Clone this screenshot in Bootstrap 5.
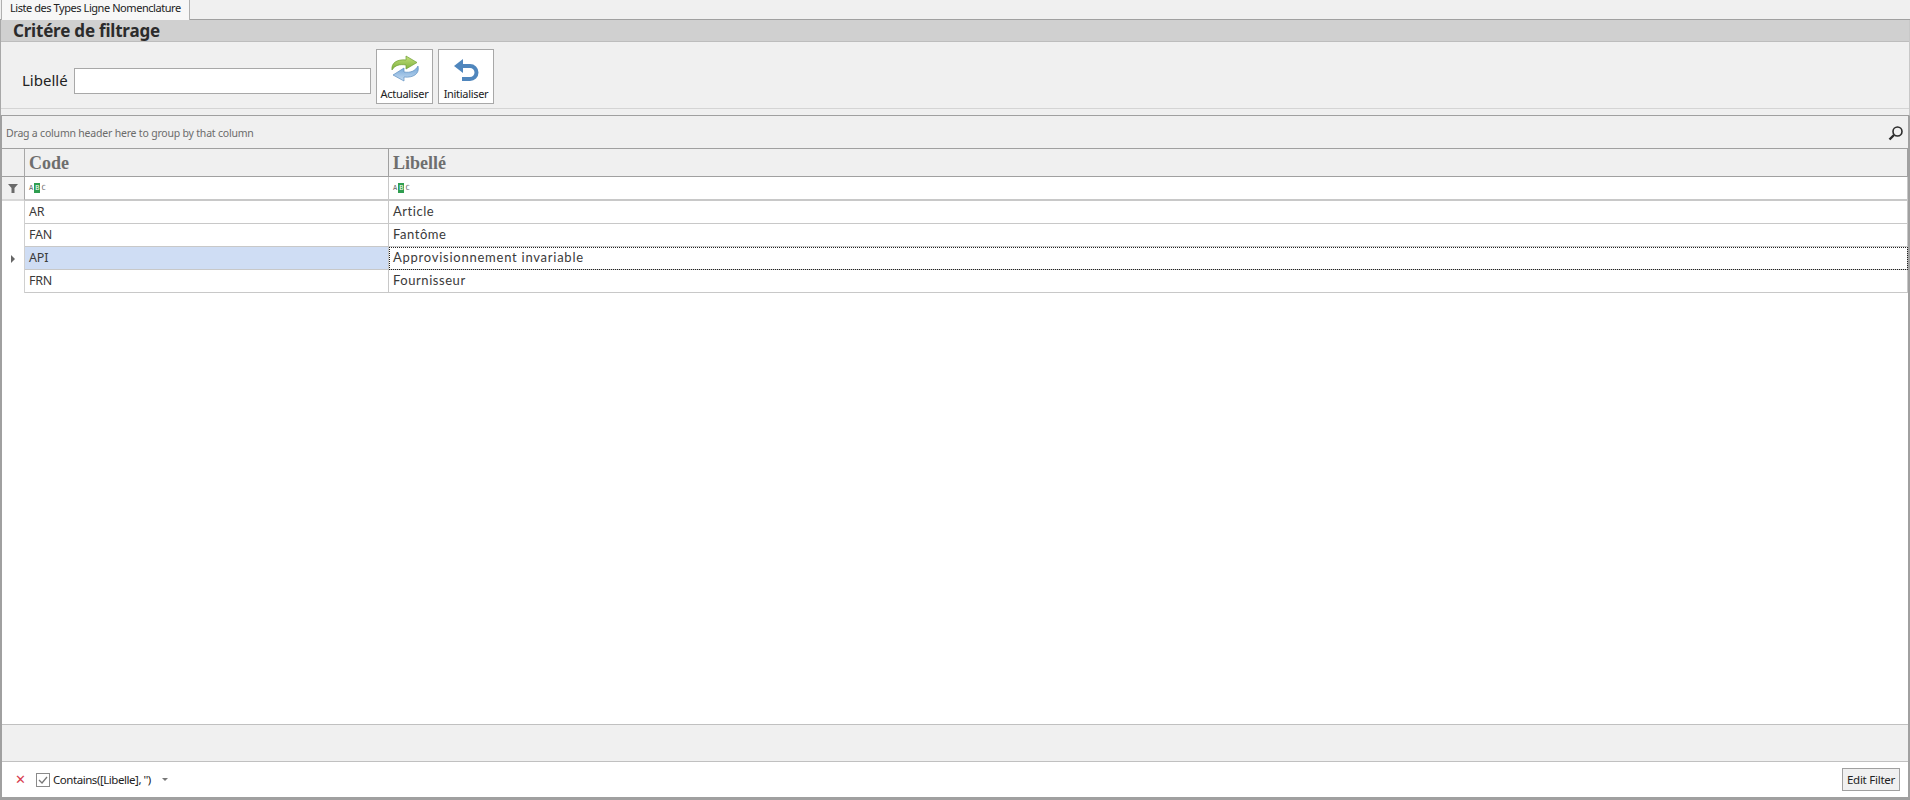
<!DOCTYPE html>
<html lang="fr">
<head>
<meta charset="utf-8">
<title>Liste des Types Ligne Nomenclature</title>
<link href="https://cdn.jsdelivr.net/npm/bootstrap@5.3.0/dist/css/bootstrap.min.css" rel="stylesheet">
<style>
html,body{height:100%;margin:0;overflow:hidden;background:#f0f0f0;color:#222;font-family:"Liberation Sans",sans-serif}
.shell{height:800px}
.tabstrip{height:20px;background:#f0f0f0;border-bottom:1px solid #a0a0a0;padding-left:1px}
.doc-tab{width:189px;height:20px;background:#f7f7f7;border:1px solid #b0b0b0;border-top:0;border-bottom:0;font:11px/16px "Noto Sans",sans-serif;letter-spacing:-.44px;padding-left:8px;color:#222;white-space:nowrap}
.filter-panel{height:96px;border-left:1px solid #a8a8a8;border-right:1px solid #c8c8c8;border-bottom:1px solid #a0a0a0;background:#f0f0f0}
.panel-title{height:22px;background:#d0d0d0;border-bottom:1px solid #bdbdbd;padding-left:12px;font:bold 17px/22px "Noto Sans",sans-serif;letter-spacing:-.2px;color:#2b2b2b}
.panel-body-row{height:67px;border-bottom:1px solid #d4d4d4;padding-left:21px;padding-top:7px}
.field-label{font:15px/1 "Noto Sans",sans-serif;width:52px;margin-top:24px;color:#222}
.field-input{width:297px;height:26px;background:#fff;border:1px solid #a8a8a8;margin-top:19px}
.tool-btn{width:57px;height:55px;background:#fff;border:1px solid #a8a8a8;font:11px/1 "Noto Sans",sans-serif;letter-spacing:-.3px;color:#222;padding:5px 0 0;margin-left:5px}
.tool-btn svg{display:block;margin-bottom:3px}
.grid-wrap{flex:1 1 auto;min-height:0;border-left:2px solid #a0a0a0;border-right:2px solid #a0a0a0;background:#fff}
.group-bar{height:33px;background:#f0f0f0;border-bottom:1px solid #a0a0a0;padding:1px 4px 0;font:10.5px "Noto Sans",sans-serif;letter-spacing:-.2px;color:#6b6b6b}
.data-grid{table-layout:fixed;width:100%;margin:0;border-collapse:separate;border-spacing:0;background:#fff}
.data-grid td,.data-grid th{padding:0 0 0 4px;border-right:1px solid #c8c8c8;border-bottom:1px solid #c8c8c8;vertical-align:middle;background:#fff;box-shadow:none;overflow:hidden;white-space:nowrap;line-height:1}
.data-grid .ind{width:23px;padding:0;border-right:1px solid #a8a8a8;text-align:center}
.data-grid .col-code{width:364px}
.data-grid thead th{height:28px;background:#f0f0f0;border-color:#a0a0a0;font:bold 18px/1 "Liberation Serif",serif;color:#6e6e6e}
.data-grid .filter-row td{height:24px;border-bottom:2px solid #c8c8c8;font-size:9px}
.data-grid .filter-row .ind{background:#f0f0f0;border-bottom-color:#d8d8d8}
.data-grid .data-row td{height:23px;padding-bottom:1px;font:13px/1 "Lato",sans-serif;letter-spacing:.55px;color:#3a3a3a}
.data-grid .data-row .code-cell{font-family:"Noto Sans",sans-serif;font-size:12.5px;letter-spacing:-.2px;padding-bottom:0}
.data-grid .data-row .ind{border-bottom:0;border-right-color:#d0d0d0;padding-bottom:2px}
.data-grid .active-row .code-cell{background:#cfddf4}
.data-grid .active-row .focus-cell{outline:1px dotted #222;outline-offset:-1px;letter-spacing:.75px}
.abc-tag{font:7px/9px "DejaVu Sans Mono",monospace;color:#666;display:inline-flex;align-items:center;gap:1px}
.abc-tag b{background:#2f9e50;color:#fff;font-weight:400;padding:0 1px;line-height:10px}
.status-gray{height:38px;background:#f0f0f0;border-top:1px solid #c0c0c0;border-bottom:1px solid #c0c0c0}
.filter-foot{height:35px;background:#fff;padding:0 8px 0 13px}
.x-mark{color:#d8404f;font:13px/1 "DejaVu Sans",sans-serif;width:14px;margin-right:7px;margin-top:-1px}
.check-box{width:14px;height:14px;border:1px solid #8a8a8a;margin-right:3px}
.filter-text{font:11.5px "Noto Sans",sans-serif;letter-spacing:-.45px;color:#222;width:105px;white-space:nowrap}
.caret-down{width:0;height:0;border-left:3.5px solid transparent;border-right:3.5px solid transparent;border-top:3.5px solid #777}
.edit-btn{width:58px;height:23px;background:#f0f0f0;border:1px solid #a0a0a0;font:11.5px/1 "Noto Sans",sans-serif;letter-spacing:-.25px;color:#222;padding:0}
.foot-line{height:3px;background:#a0a0a0}
</style>
</head>
<body>
<div class="shell d-flex flex-column">
  <div class="tabstrip flex-shrink-0 d-flex"><div class="doc-tab">Liste des Types Ligne Nomenclature</div></div>
  <div class="filter-panel flex-shrink-0">
    <div class="panel-title">Critére de filtrage</div>
    <div class="panel-body-row d-flex align-items-start">
      <div class="field-label">Libellé</div>
      <div class="field-input"></div>
      <button class="tool-btn d-flex flex-column align-items-center" type="button">
        <svg width="32" height="30" viewBox="0 0 32 30">
          <defs>
            <linearGradient id="gGreen" x1="0" y1="0" x2="0" y2="1"><stop offset="0" stop-color="#c3e07a"/><stop offset="1" stop-color="#7cb03c"/></linearGradient>
            <linearGradient id="gBlue" x1="0" y1="0" x2="0" y2="1"><stop offset="0" stop-color="#6fa3d6"/><stop offset="1" stop-color="#c6dcf2"/></linearGradient>
          </defs>
          <path d="M3 15C2 8 8 4 17 5V1l11 6.500L17 14v-4C11 9 6 10 3 15Z" fill="url(#gGreen)" stroke="#6f9e35" stroke-width=".7"/>
          <path d="M29 11c2 8-5 12-14 11v4L4 20l11-7v4c7 1 11-1 14-6Z" fill="url(#gBlue)" stroke="#5f8fc0" stroke-width=".7"/>
        </svg>
        Actualiser
      </button>
      <button class="tool-btn d-flex flex-column align-items-center" type="button" style="width:56px">
        <svg width="32" height="30" viewBox="0 0 32 30">
          <path d="M13 4 4 11l9 7Z" fill="#4f86bd"/>
          <path d="M11 11h9a6.500 6.500 0 0 1 0 13h-8" fill="none" stroke="#4f86bd" stroke-width="4"/>
        </svg>
        Initialiser
      </button>
    </div>
  </div>
  <div class="grid-wrap d-flex flex-column">
    <div class="group-bar flex-shrink-0 d-flex align-items-center justify-content-between">
      <span>Drag a column header here to group by that column</span>
      <svg width="16" height="16" viewBox="0 0 16 16"><circle cx="9.500" cy="6.500" r="4.500" fill="none" stroke="#2b2b2b" stroke-width="1.600"/><path d="M6 10 1.500 14.500" stroke="#2b2b2b" stroke-width="2.400"/></svg>
    </div>
    <table class="table data-grid">
      <thead>
        <tr><th class="ind"></th><th class="col-code">Code</th><th>Libellé</th></tr>
      </thead>
      <tbody>
        <tr class="filter-row">
          <td class="ind"><svg width="10" height="9" viewBox="0 0 10 9"><path d="M0 0h10L6.500 4v5h-3V4Z" fill="#6a6a6a"/></svg></td>
          <td><span class="abc-tag">A<b>B</b>C</span></td>
          <td><span class="abc-tag">A<b>B</b>C</span></td>
        </tr>
        <tr class="data-row"><td class="ind"></td><td class="code-cell">AR</td><td>Article</td></tr>
        <tr class="data-row"><td class="ind"></td><td class="code-cell">FAN</td><td>Fantôme</td></tr>
        <tr class="data-row active-row"><td class="ind"><svg width="5" height="8" viewBox="0 0 5 8"><path d="M0 0l4 4-4 4Z" fill="#666"/></svg></td><td class="code-cell">API</td><td class="focus-cell">Approvisionnement invariable</td></tr>
        <tr class="data-row"><td class="ind"></td><td class="code-cell">FRN</td><td>Fournisseur</td></tr>
      </tbody>
    </table>
    <div class="flex-grow-1"></div>
    <div class="status-gray flex-shrink-0"></div>
    <div class="filter-foot flex-shrink-0 d-flex align-items-center">
      <span class="x-mark">✕</span>
      <span class="check-box d-flex align-items-center justify-content-center"><svg width="10" height="8" viewBox="0 0 10 8"><path d="M1 4l3 3 5-6" fill="none" stroke="#777" stroke-width="1.300"/></svg></span>
      <span class="filter-text">Contains([Libelle], '')</span>
      <span class="caret-down ms-1"></span>
      <button class="edit-btn ms-auto" type="button">Edit Filter</button>
    </div>
  </div>
  <div class="foot-line flex-shrink-0"></div>
</div>
</body>
</html>
